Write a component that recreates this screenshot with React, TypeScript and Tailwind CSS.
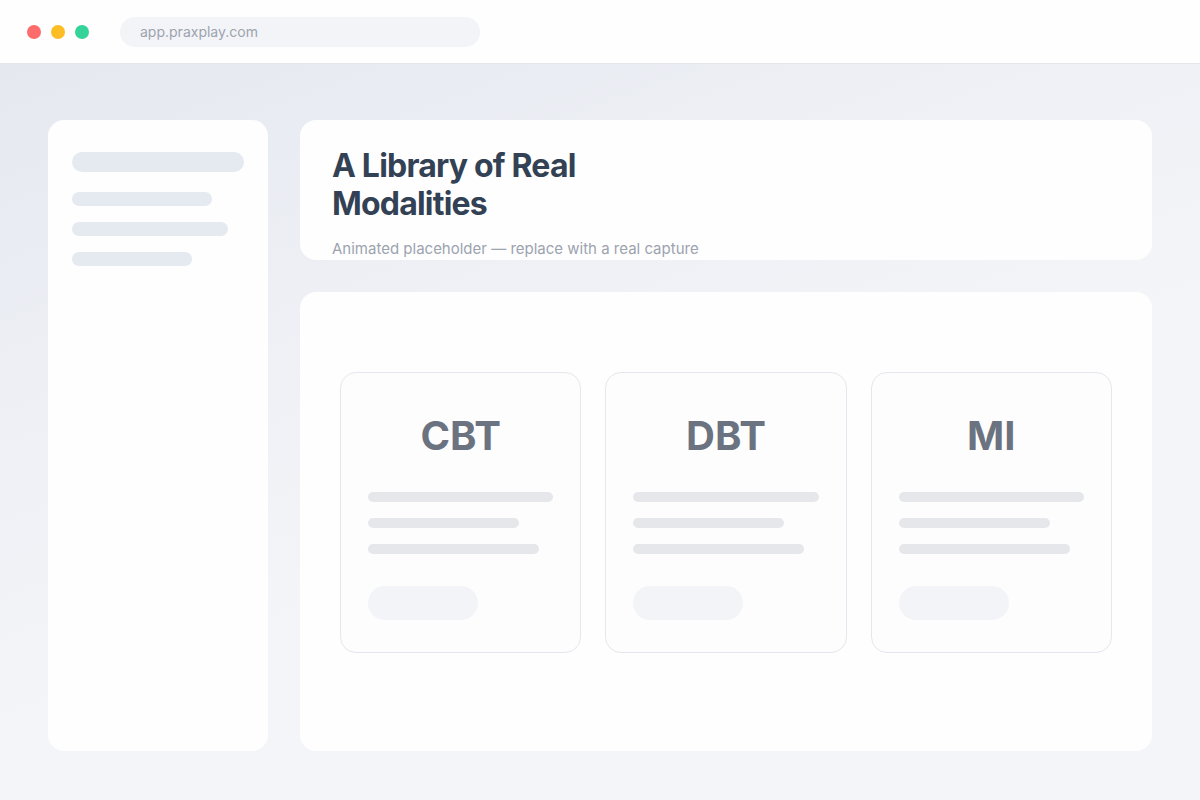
import React from "react";

function ModCard({ title }: { title: string }) {
  return (
    <div className="flex flex-col rounded-2xl border border-[#e6e7ec] bg-[#fdfdfe] px-[27px] pt-[39px] pb-[32px]">
      <div className="text-center text-[40px] font-bold leading-[48px] text-[#6b7280]">{title}</div>
      <div className="mt-8 flex flex-col gap-4">
        <div className="h-[10px] w-full rounded-full bg-[#e6e7eb]" />
        <div className="h-[10px] w-[151px] rounded-full bg-[#e6e7eb]" />
        <div className="h-[10px] w-[171px] rounded-full bg-[#e6e7eb]" />
      </div>
      <div className="mt-8 h-[34px] w-[110px] rounded-full bg-[#f3f4f8]" />
    </div>
  );
}

export default function App() {
  return (
    <div
      className="flex h-[800px] w-[1200px] flex-col overflow-hidden bg-[linear-gradient(160deg,#e3e7ef_0%,#eef0f5_35%,#f4f5f8_60%,#f4f5f8_100%)]"
      style={{ fontFamily: "Inter, 'Noto Sans', sans-serif" }}
    >
      <div className="flex h-[64px] shrink-0 items-center border-b border-[#e5e7eb] bg-[#fefefe] pl-[27px]">
        <div className="flex gap-[10px]">
          <div className="h-[14px] w-[14px] rounded-full bg-[#fd6b6b]" />
          <div className="h-[14px] w-[14px] rounded-full bg-[#fdbd25]" />
          <div className="h-[14px] w-[14px] rounded-full bg-[#33d399]" />
        </div>
        <div className="ml-[31px] flex h-[30px] w-[360px] items-center rounded-full bg-[#f3f4f8] px-5 text-[14px] text-[#9ca3af]">
          app.praxplay.com
        </div>
      </div>
      <div className="flex flex-1 gap-8 px-12 pt-14 pb-[49px]">
        <div className="flex w-[220px] shrink-0 flex-col rounded-2xl bg-[#fefefe] px-6 pt-8">
          <div className="h-5 w-full rounded-full bg-[#e5e9f0]" />
          <div className="mt-5 flex flex-col gap-4">
            <div className="h-[14px] w-[140px] rounded-full bg-[#e5e9f0]" />
            <div className="h-[14px] w-[156px] rounded-full bg-[#e5e9f0]" />
            <div className="h-[14px] w-[120px] rounded-full bg-[#e5e9f0]" />
          </div>
        </div>
        <div className="flex flex-1 flex-col gap-8">
          <div className="h-[140px] shrink-0 overflow-hidden rounded-2xl bg-[#fefefe] px-8 pt-[27px]">
            <h1 className="w-[300px] text-[32px] font-bold leading-[1.2] tracking-[-0.025em] text-[#334155]">
              A Library of Real Modalities
            </h1>
            <p className="mt-[14px] text-[15px] leading-[22px] text-[#9ca3af]">
              Animated placeholder — replace with a real capture
            </p>
          </div>
          <div className="flex-1 rounded-2xl bg-[#fefefe] px-10 pt-20">
            <div className="grid grid-cols-3 gap-6">
              <ModCard title="CBT" />
              <ModCard title="DBT" />
              <ModCard title="MI" />
            </div>
          </div>
        </div>
      </div>
    </div>
  );
}
